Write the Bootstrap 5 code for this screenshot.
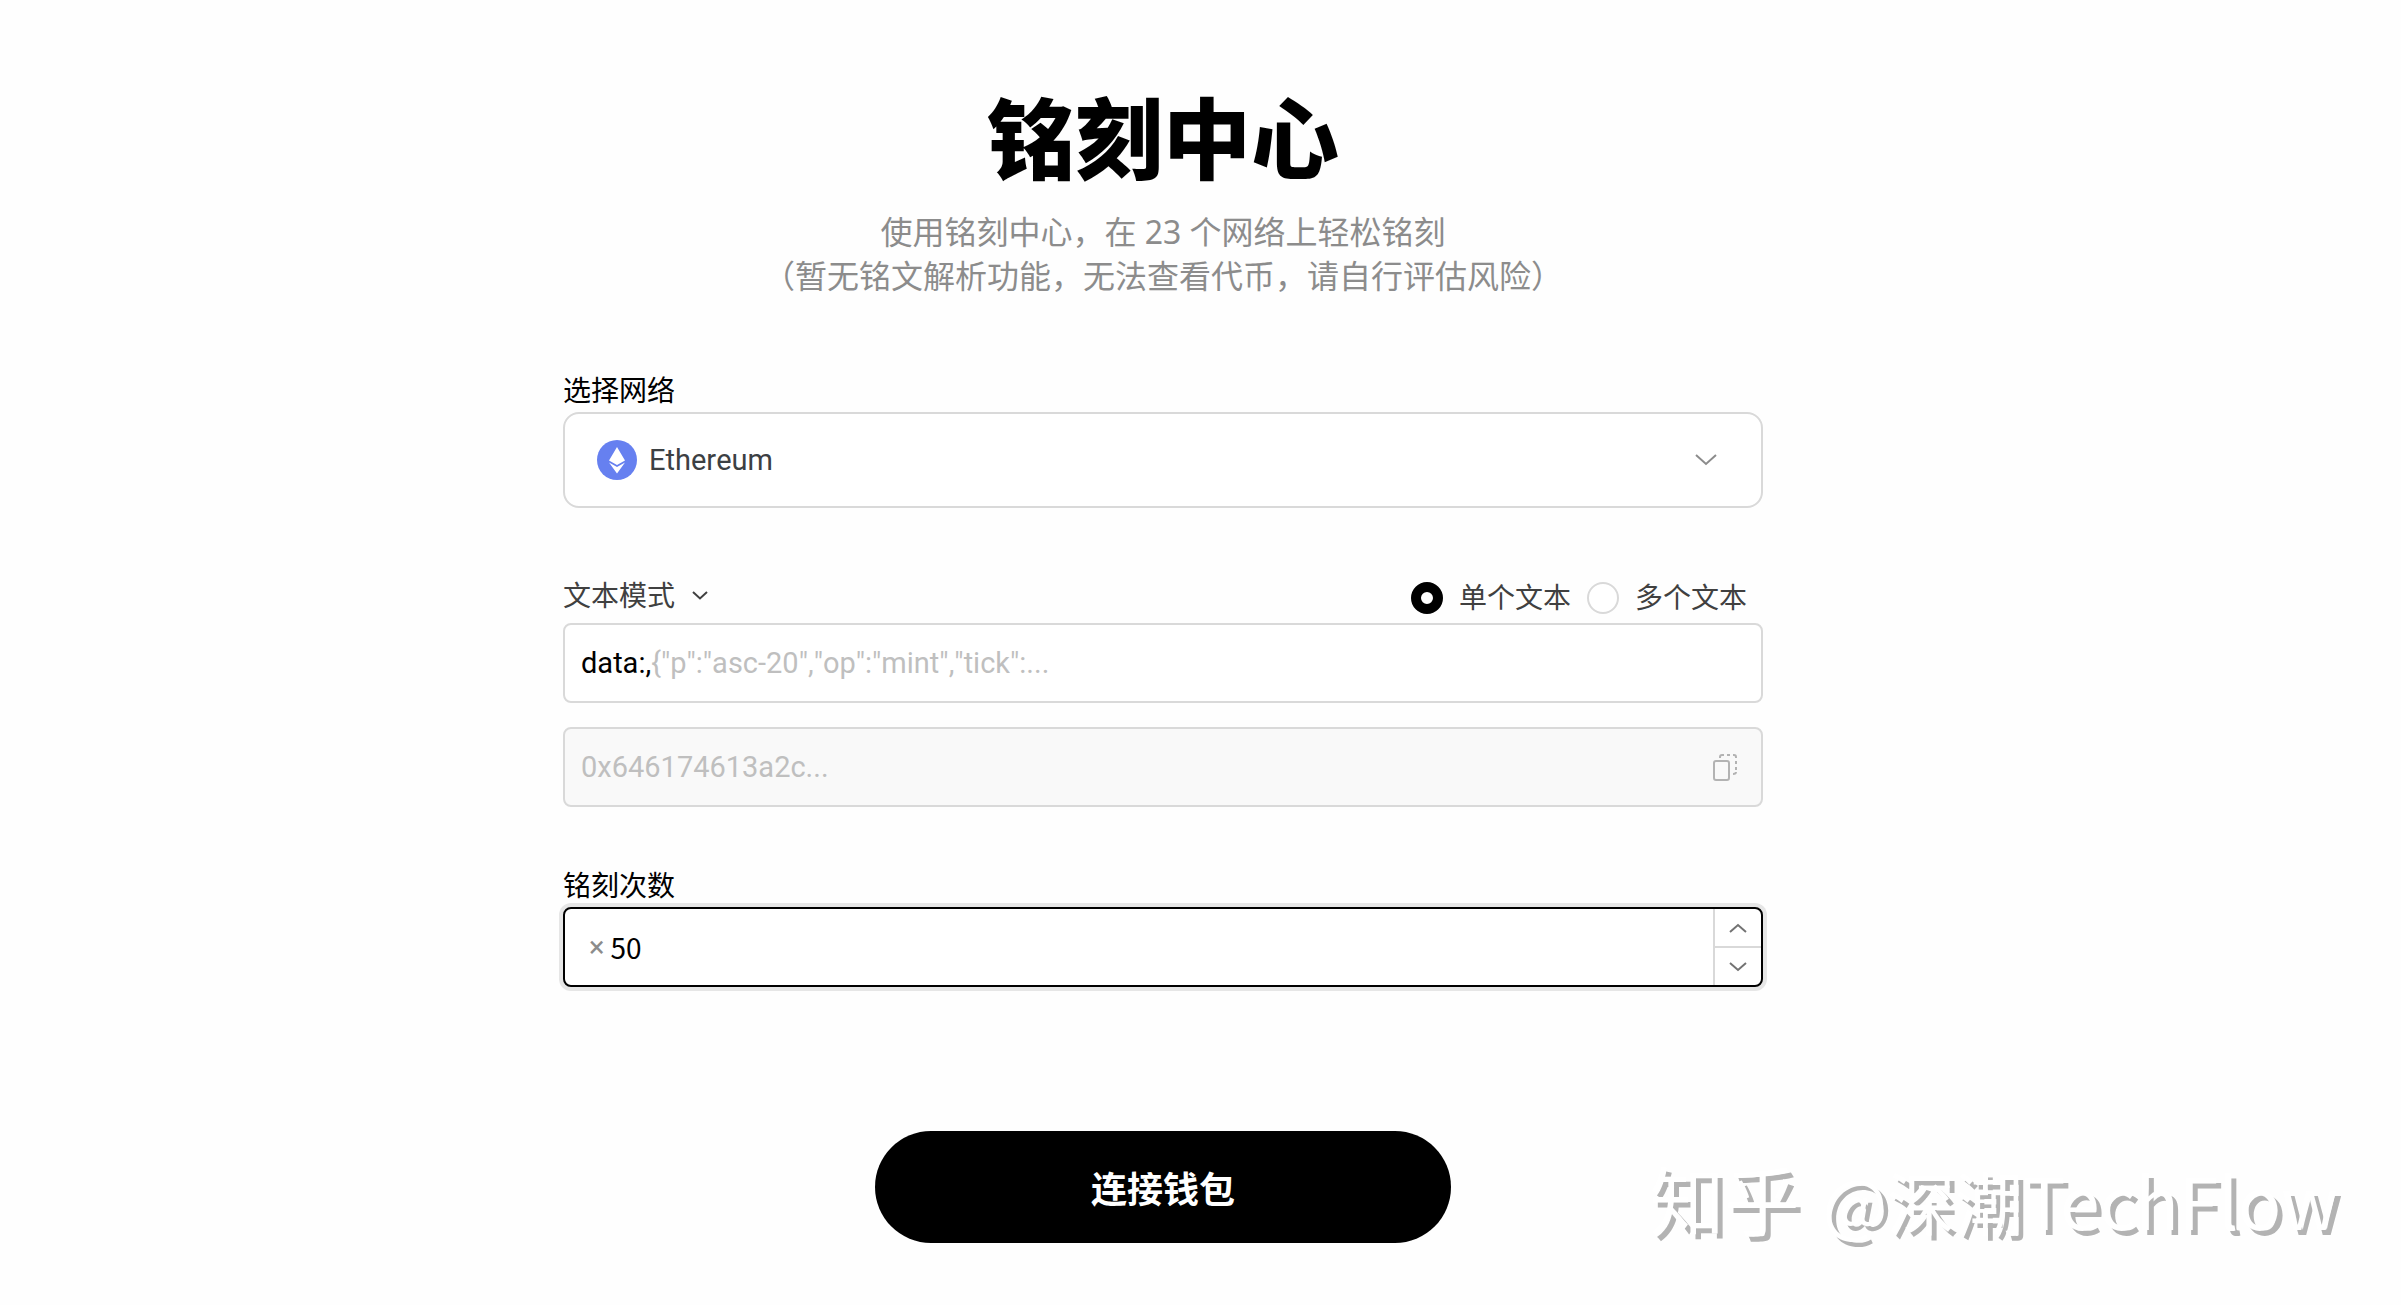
<!DOCTYPE html>
<html lang="zh-CN">
<head>
<meta charset="utf-8">
<meta name="viewport" content="width=device-width, initial-scale=1">
<title>铭刻中心</title>
<link rel="stylesheet" href="https://cdn.jsdelivr.net/npm/bootstrap@5.3.0/dist/css/bootstrap.min.css">
<style>
  body { font-family: "Noto Sans CJK SC", sans-serif; font-size: 28px; line-height: 40px; color: #000; background: #fefefe; }
  .page-body { padding: 70px 75px 60px 0; }
  .form-area { width: 100%; max-width: 1200px; }
  .latin, .latin input { font-family: Roboto, "Noto Sans CJK SC", sans-serif; font-size: 29px; font-kerning: none; }
  .page-title { font-size: 88px; line-height: 128px; font-weight: 900; }
  .page-lead { font-family: "Noto Sans", "Noto Sans CJK SC", sans-serif; font-size: 32px; line-height: 44px; color: #8c8c8c; margin-top: 12px; }
  .field-label { line-height: 34px; margin-bottom: 6px; align-self: flex-start; }
  .network-label { margin-top: 74px; }
  .count-label { margin-top: 60px; }
  .field-box { border: 2px solid #d9d9d9; border-radius: 8px; background: #fff; height: 80px; }
  .network-box { height: 96px; border-radius: 16px; padding: 0 44px 0 32px; gap: 12px; color: #3c4043; }
  .network-select, .mode-select { appearance: none; border: 0; background: transparent; color: inherit; padding: 0; outline: 0; }
  .mode-row { height: 44px; margin: 68px 0 3px; color: #404040; padding-right: 16px; }
  .mode-select { padding-bottom: 8px; }
  .mode-arrow { margin: 0 0 6px 16px; }
  .radio-group { gap: 16px; }
  .bare-input { border: 0; background: transparent; padding: 0; outline: 0; min-width: 0; color: #000; }
  .bare-input::placeholder { color: #bfbfbf; opacity: 1; }
  .data-box { padding: 0 16px; }
  .radio-dot { appearance: none; width: 32px; height: 32px; margin: 0; border: 2px solid #d9d9d9; border-radius: 50%; background: #fff; }
  .radio-dot:checked { border: 10px solid #000; }
  .hex-box { background: #f9f9f9; margin-top: 24px; padding: 0 24px 0 16px; }
  .count-box { border-color: #000; box-shadow: 0 0 0 4px #e6e6e6; overflow: hidden; padding-left: 24px; }
  .count-input { margin-left: 6px; }
  .stepper { width: 48px; border-left: 2px solid #d9d9d9; }
  .plain-btn { border: 0; background: transparent; padding: 0; line-height: 0; }
  .step-down { border-top: 2px solid #d9d9d9; }
  .times { color: #8c8c8c; }
  .wallet-btn { width: 576px; max-width: 100%; height: 112px; border-radius: 56px; background: #000; color: #fff; border: 0; font-size: 36px; font-weight: 700; margin-top: 144px; }
  .watermark { position: absolute; right: 63px; bottom: 64px; font-size: 68px; line-height: 80px; color: #fff; text-shadow: 5px 5px 0 #b3b3b3; white-space: nowrap; }
  .mark-site { font-size: 75px; margin-right: 8px; }
  .mark-name { font-size: 71px; }
</style>
</head>
<body>
<main class="page-body d-flex justify-content-center">
  <form class="form-area d-flex flex-column">
    <h1 class="page-title text-center mb-0">铭刻中心</h1>
    <p class="page-lead text-center mb-0">使用铭刻中心，在 23 个网络上轻松铭刻<br>（暂无铭文解析功能，无法查看代币，请自行评估风险）</p>

    <label class="field-label network-label" for="network">选择网络</label>
    <div class="field-box network-box d-flex align-items-center">
      <svg width="40" height="40" viewBox="0 0 40 40" aria-hidden="true"><circle cx="20" cy="20" r="20" fill="#6680f0"/><path fill="#fff" d="M20 7l8 13.500-8 4.500-8-4.500zM20 33.500l-8-11 8 4.500 8-4.500z"/></svg>
      <select id="network" class="latin network-select flex-grow-1"><option>Ethereum</option></select>
      <svg width="22" height="12" viewBox="0 0 22 12" fill="none" stroke="#8c8c8c" stroke-width="2" aria-hidden="true"><path d="M1 1l10 9 10-9"/></svg>
    </div>

    <div class="mode-row d-flex align-items-center justify-content-between">
      <div class="d-flex align-items-center">
        <select class="mode-select" aria-label="文本模式"><option>文本模式</option></select>
        <svg class="mode-arrow" width="16" height="9" viewBox="0 0 16 9" fill="none" stroke="#404040" stroke-width="2" aria-hidden="true"><path d="M1 1l7 6.500L15 1"/></svg>
      </div>
      <div class="radio-group d-flex align-items-center">
        <input class="radio-dot" type="radio" name="amount" id="single" checked><label class="pb-1" for="single">单个文本</label>
        <input class="radio-dot" type="radio" name="amount" id="multi"><label class="pb-1" for="multi">多个文本</label>
      </div>
    </div>

    <div class="field-box data-box d-flex align-items-center latin">
      <label for="data">data:,</label>
      <input id="data" class="bare-input flex-grow-1" type="text" placeholder='{"p":"asc-20","op":"mint","tick":...'>
    </div>
    <div class="field-box hex-box d-flex align-items-center latin">
      <input class="bare-input flex-grow-1" type="text" placeholder="0x646174613a2c..." aria-label="Hex" readonly>
      <button class="plain-btn" type="button" aria-label="复制">
        <svg width="24" height="28" viewBox="0 0 24 28" fill="none" stroke="#b3b3b3" stroke-width="2"><rect x="1" y="8" width="15" height="19" rx="2"/><path d="M7 5V4q0-2 2-2h2M14 2h3M20 2h1q2 0 2 2v1M23 8v3M23 14v3M23 19q0 2-3 2"/></svg>
      </button>
    </div>

    <label class="field-label count-label" for="count">铭刻次数</label>
    <div class="field-box count-box d-flex align-items-center">
      <span class="times latin">×</span>
      <input id="count" class="bare-input count-input flex-grow-1" type="text" inputmode="numeric" value="50">
      <div class="stepper d-flex flex-column align-self-stretch">
        <button class="plain-btn flex-fill" type="button" aria-label="增加"><svg width="18" height="10" viewBox="0 0 18 10" fill="none" stroke="#737373" stroke-width="2"><path d="M1 9l8-7 8 7"/></svg></button>
        <button class="plain-btn step-down flex-fill" type="button" aria-label="减少"><svg width="18" height="10" viewBox="0 0 18 10" fill="none" stroke="#737373" stroke-width="2"><path d="M1 1l8 7 8-7"/></svg></button>
      </div>
    </div>

    <button class="wallet-btn align-self-center" type="button">连接钱包</button>
  </form>
</main>
<div class="watermark"><span class="mark-site">知乎</span> @深潮<span class="mark-name">TechFlow</span></div>
<script src="https://cdn.jsdelivr.net/npm/bootstrap@5.3.0/dist/js/bootstrap.bundle.min.js"></script>
</body>
</html>
